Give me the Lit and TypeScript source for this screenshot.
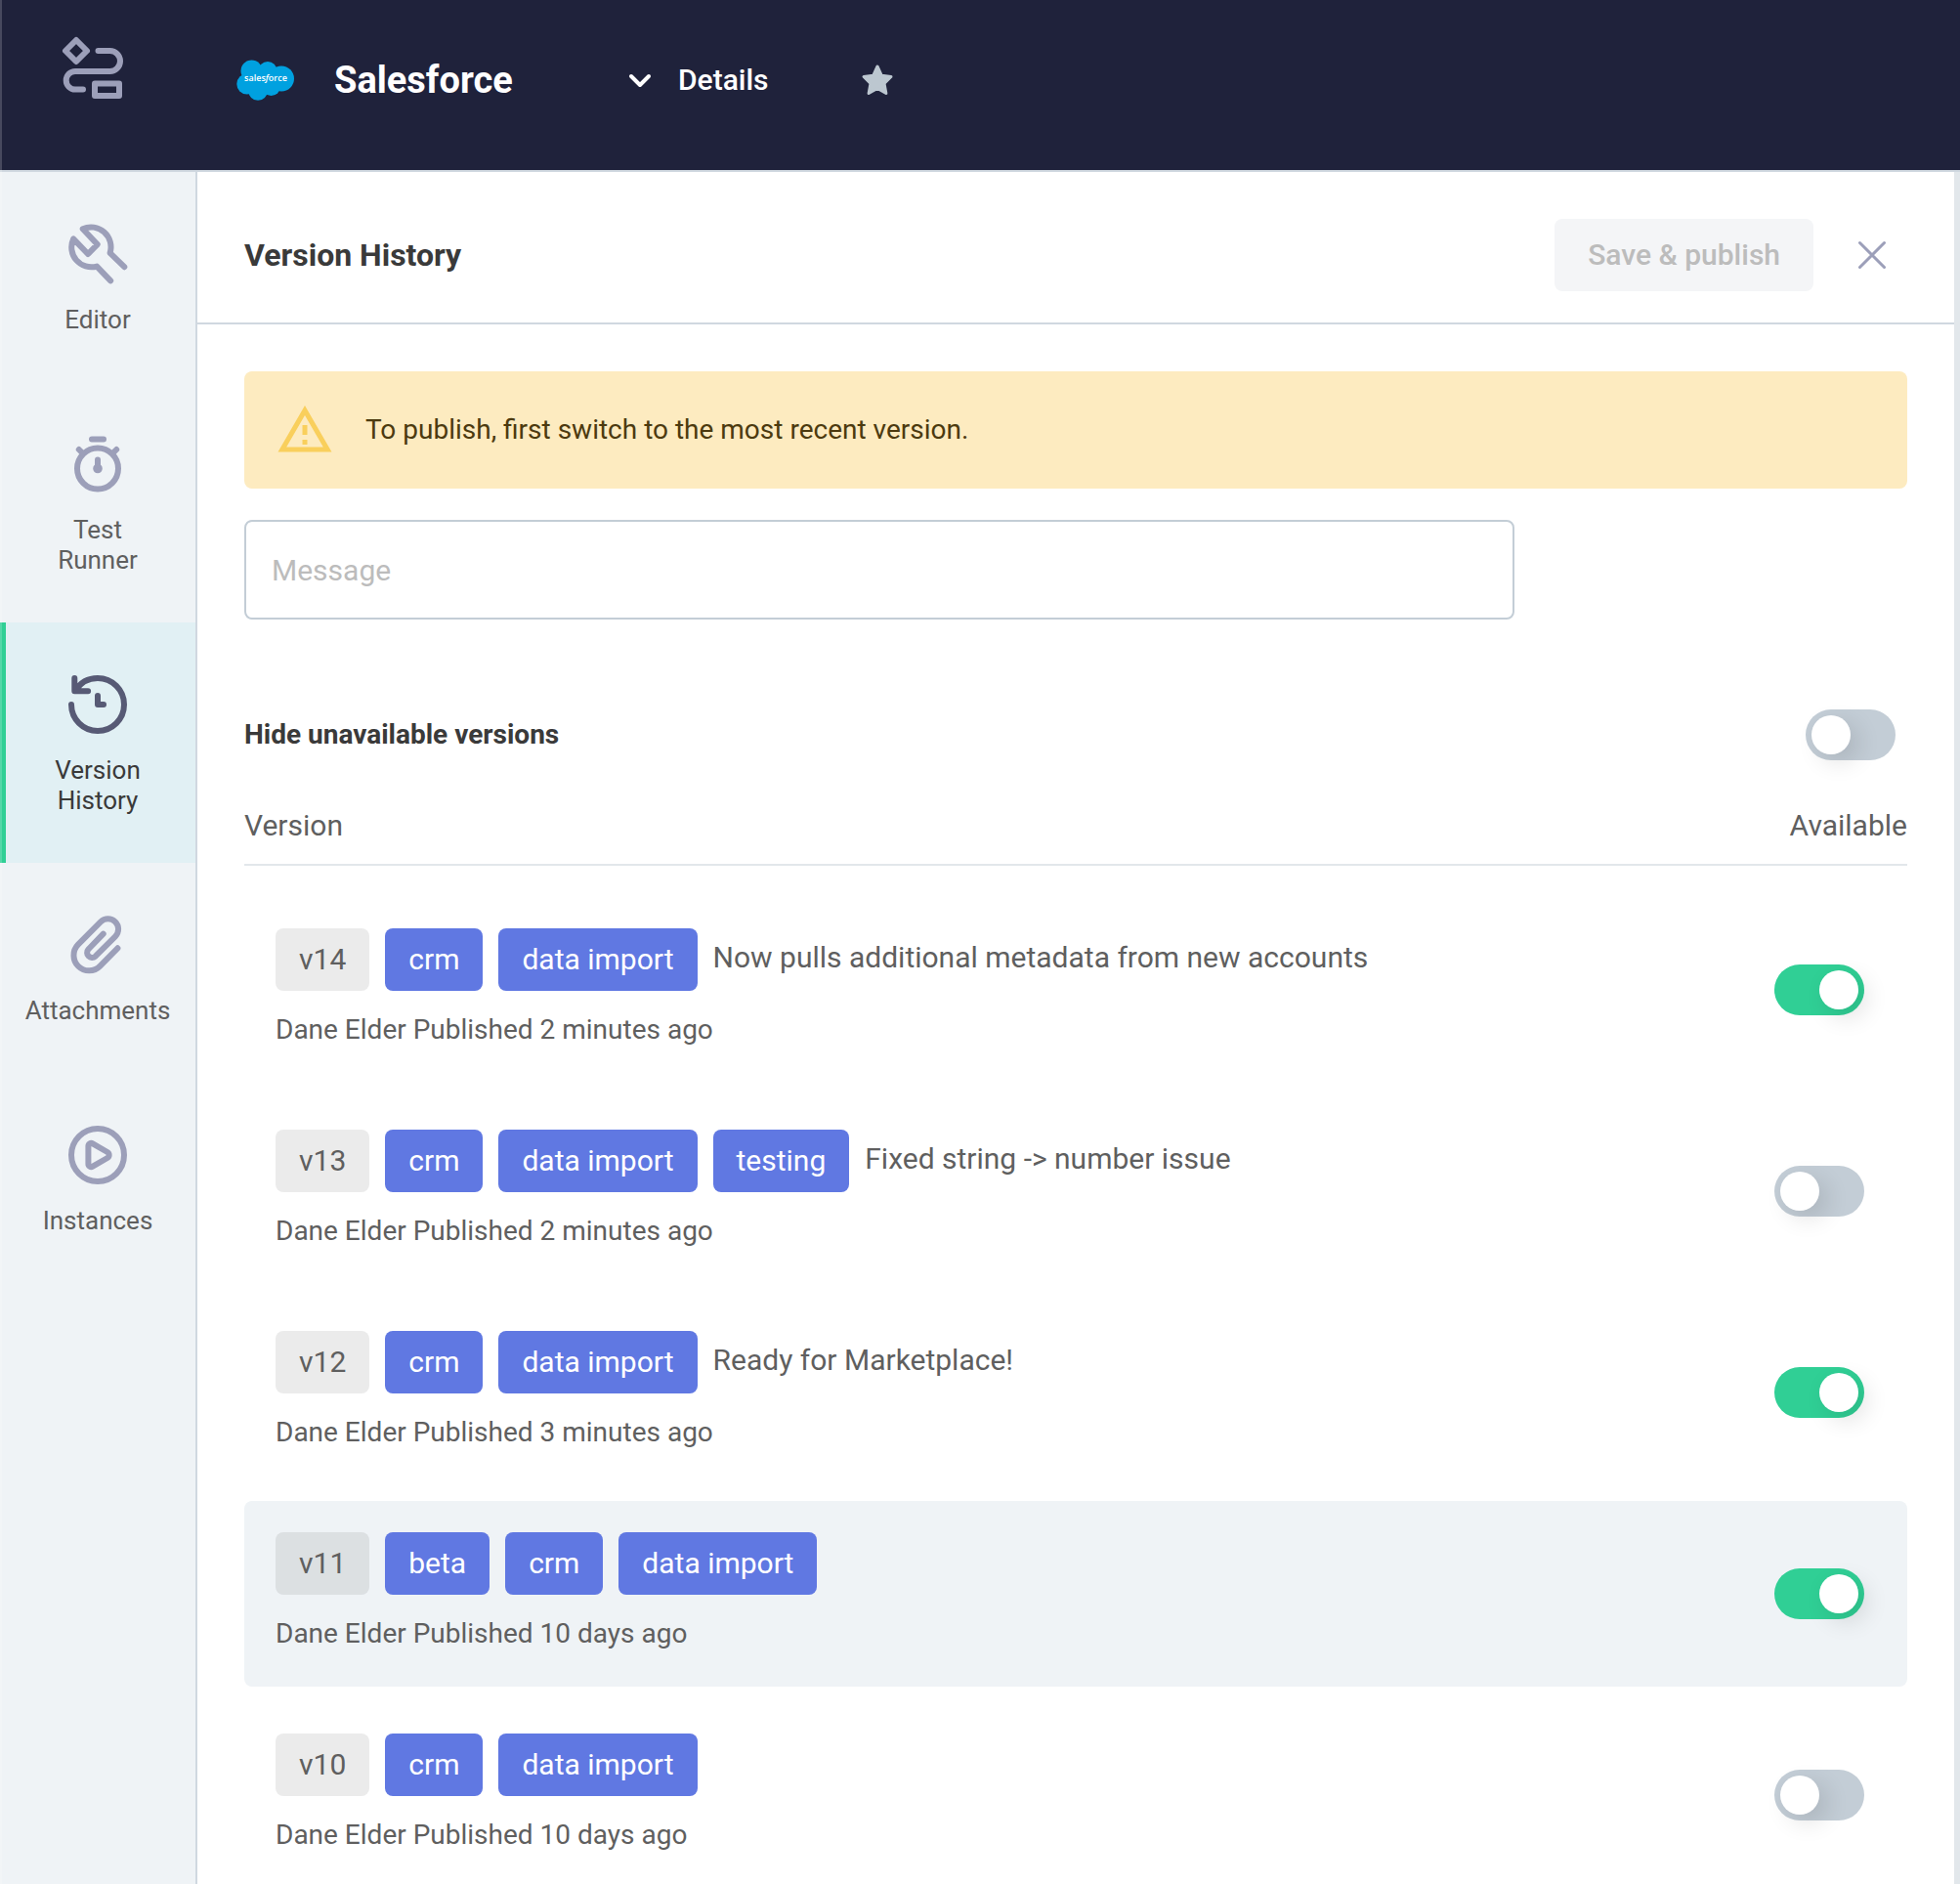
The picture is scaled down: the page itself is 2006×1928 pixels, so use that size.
import { LitElement, html, css, svg, nothing } from "lit";
import type { SVGTemplateResult } from "lit";
import { customElement, property, state } from "lit/decorators.js";
import { classMap } from "lit/directives/class-map.js";

interface NavItem {
  id: string;
  label: string;
  icon: SVGTemplateResult;
}

interface VersionRow {
  version: string;
  tags: string[];
  message?: string;
  published: string;
  available: boolean;
  current?: boolean;
}

const NAV_ITEMS: NavItem[] = [
  {
    id: "editor",
    label: "Editor",
    icon: svg`<path d="M21.1 16.4 L16.2 11.6 A6.8 6.8 0 0 0 6.9 3.4 L11.9 8.7 L8.7 12 L3.7 6.8 A6.8 6.8 0 0 0 11.7 16.2 L16.4 21.1"/>`,
  },
  {
    id: "test",
    label: "Test Runner",
    icon: svg`<circle cx="12" cy="13.5" r="7"/><path d="M10 3.5h4M5.6 7l1.2 1.2M18.4 7l-1.2 1.2M12 10.5v3"/><circle cx="12" cy="13.5" r="0.6"/>`,
  },
  {
    id: "history",
    label: "Version History",
    icon: svg`<path d="M3 12a9 9 0 1 0 9-9c-3.2 0-6 1.6-7.6 4.3M4.1 3v4.4h4.6M12 9v3h2"/>`,
  },
  {
    id: "attachments",
    label: "Attachments",
    icon: svg`<path d="M18.8 13.1 L12.8 19.2 A5.2 5.2 0 0 1 5.3 11.9 L13 4.1 A3.5 3.5 0 0 1 18 9.1 L11.2 15.9 A1.7 1.7 0 0 1 8.8 13.5 L13.9 8.2"/>`,
  },
  {
    id: "instances",
    label: "Instances",
    icon: svg`<circle cx="12" cy="12" r="9"/><path d="M8.8 9a1 1 0 0 1 1.5-.9l5 2.9a1.15 1.15 0 0 1 0 2l-5 2.9A1 1 0 0 1 8.8 15z"/>`,
  },
];

const VERSIONS: VersionRow[] = [
  {
    version: "v14",
    tags: ["crm", "data import"],
    message: "Now pulls additional metadata from new accounts",
    published: "Dane Elder Published 2 minutes ago",
    available: true,
  },
  {
    version: "v13",
    tags: ["crm", "data import", "testing"],
    message: "Fixed string -> number issue",
    published: "Dane Elder Published 2 minutes ago",
    available: false,
  },
  {
    version: "v12",
    tags: ["crm", "data import"],
    message: "Ready for Marketplace!",
    published: "Dane Elder Published 3 minutes ago",
    available: true,
  },
  {
    version: "v11",
    tags: ["beta", "crm", "data import"],
    published: "Dane Elder Published 10 days ago",
    available: true,
    current: true,
  },
  {
    version: "v10",
    tags: ["crm", "data import"],
    published: "Dane Elder Published 10 days ago",
    available: false,
  },
];

@customElement("app-header")
class AppHeader extends LitElement {
  static styles = css`
    :host {
      display: flex;
      height: 174px;
      background: #1f223b;
      border-bottom: 2px solid #d0d8e0;
      color: #fff;
    }
    .logo {
      flex: 0 0 202px;
      padding: 36px 0 0 62px;
      box-sizing: border-box;
    }
    .logo svg,
    .bar svg {
      display: block;
    }
    .bar {
      display: flex;
      align-items: center;
      flex: 1;
      padding: 0 40px 10px;
    }
    .title {
      margin: 0 0 0 40px;
      width: 298px;
      font-size: 38px;
      line-height: 44px;
      font-weight: 700;
    }
    button {
      display: flex;
      align-items: center;
      padding: 0;
      border: 0;
      background: none;
      color: inherit;
      font: inherit;
      cursor: pointer;
    }
    .details {
      gap: 24px;
      font-size: 30px;
      line-height: 36px;
      font-weight: 500;
    }
    .star {
      margin-left: 90px;
    }
  `;

  render() {
    return html`
      <div class="logo">
        <svg width="66" height="68" viewBox="0 0 66 68" fill="none" stroke="#9c9fb9"
          stroke-width="6" stroke-linecap="round" stroke-linejoin="round" aria-hidden="true">
          <path d="M16 5 L27 16 L16 27 L5 16z" />
          <path d="M38.500 16 H50.500 A10.500 10.500 0 0 1 50.500 37 H15 A9.300 9.300 0 0 0 15 55.600 H23" />
          <rect x="35" y="49.500" width="25" height="12.500" />
        </svg>
      </div>
      <div class="bar">
        <svg width="60" height="42" viewBox="0 0 60 42" role="img" aria-label="Salesforce logo">
          <g fill="#00a1e0">
            <circle cx="15.500" cy="11.500" r="11" />
            <circle cx="32" cy="11.500" r="9.500" />
            <circle cx="46" cy="19.500" r="13" />
            <circle cx="10.800" cy="25" r="10.500" />
            <circle cx="22" cy="32" r="9.800" />
            <circle cx="35.500" cy="27.500" r="9.500" />
            <path d="M12 12h36v15H12z" />
          </g>
          <text x="30" y="22" text-anchor="middle" fill="#fff" font-size="9" font-weight="600"
            font-family="Open Sans, Noto Sans, sans-serif">sales<tspan font-style="italic">f</tspan>orce</text>
        </svg>
        <h1 class="title">Salesforce</h1>
        <button class="details" type="button">
          <svg width="30" height="30" viewBox="0 0 30 30" fill="none" stroke="#fff" stroke-width="4"
            stroke-linecap="round" stroke-linejoin="round" aria-hidden="true">
            <path d="M6 11l9 9 9-9" />
          </svg>
          Details
        </button>
        <button class="star" type="button" aria-label="Favorite">
          <svg width="42" height="42" viewBox="0 0 42 42" fill="#bcc7d0" stroke="#bcc7d0"
            stroke-width="3" stroke-linejoin="round" aria-hidden="true">
            <path d="M21 7l4.300 9.300 9.700 1.200-7 6.800 1.900 10.200L21 29.500l-8.900 5L14 24.300l-7-6.800 9.700-1.200z" />
          </svg>
        </button>
      </div>
    `;
  }
}

@customElement("side-nav")
class SideNav extends LitElement {
  @property() active = "";

  static styles = css`
    :host {
      flex: 0 0 200px;
      background: #eff3f6;
      border-right: 2px solid #d0d8e0;
    }
    .item {
      display: flex;
      flex-direction: column;
      align-items: center;
      gap: 16px;
      padding: 48px 16px;
      color: #5f5f5f;
      font-size: 26px;
      line-height: 31px;
      text-align: center;
      text-decoration: none;
    }
    .label {
      width: min-content;
    }
    .item svg {
      display: block;
      stroke: #9c9fb9;
    }
    .item.active {
      background: #e1f0f4;
      box-shadow: inset 6px 0 #30cf95;
      color: #3a3a3a;
    }
    .item.active svg {
      stroke: #575a75;
    }
  `;

  render() {
    return html`<nav aria-label="Integration">
      ${NAV_ITEMS.map(
        (item) => html`<a
          href="#${item.id}"
          class=${classMap({ item: true, active: item.id === this.active })}
          aria-current=${item.id === this.active ? "page" : nothing}
        >
          <svg width="72" height="72" viewBox="0 0 24 24" fill="none" stroke-width="2"
            stroke-linecap="round" stroke-linejoin="round" aria-hidden="true">${item.icon}</svg>
          <span class="label">${item.label}</span>
        </a>`
      )}
    </nav>`;
  }
}

@customElement("version-history")
class VersionHistory extends LitElement {
  @state() private rows = VERSIONS;

  static styles = css`
    :host {
      flex: 1;
      min-width: 0;
      display: flex;
      flex-direction: column;
      background: #fff;
      border-right: 6px solid #e2e7eb;
      color: #5f5f5f;
      font-size: 30px;
      line-height: 36px;
    }
    .head {
      display: flex;
      align-items: center;
      padding: 48px 64px 32px 48px;
      border-bottom: 2px solid #d0d8e0;
    }
    h2 {
      flex: 1;
      margin: 0;
      color: #3a3a3a;
      font-size: 32px;
      font-weight: 700;
    }
    .save {
      height: 74px;
      padding: 0 34px;
      border: 0;
      border-radius: 8px;
      background: #f4f5f7;
      color: #bcbcbc;
      font: inherit;
      font-weight: 500;
    }
    .close {
      margin-left: 40px;
      padding: 0;
      border: 0;
      background: none;
      cursor: pointer;
    }
    .close svg,
    .banner svg {
      display: block;
    }
    .content {
      flex: 1;
      min-height: 0;
      overflow-y: auto;
      scrollbar-width: none;
      padding: 48px;
    }
    .banner {
      display: flex;
      align-items: center;
      gap: 32px;
      padding: 30px 32px;
      border-radius: 8px;
      background: #fdebc0;
      color: #4c3a0f;
      font-size: 28px;
    }
    .message {
      display: block;
      box-sizing: border-box;
      width: 100%;
      max-width: 1300px;
      height: 102px;
      margin-top: 32px;
      padding: 0 26px;
      border: 2px solid #c3cdd6;
      border-radius: 8px;
      background: none;
      color: #3a3a3a;
      font: inherit;
    }
    .message::placeholder {
      color: #bcbcbc;
      opacity: 1;
    }
    .filter {
      display: flex;
      align-items: center;
      justify-content: space-between;
      margin-top: 80px;
      color: #3a3a3a;
      font-size: 28px;
      font-weight: 700;
    }
    .toggle {
      appearance: none;
      display: block;
      flex: none;
      width: 92px;
      height: 52px;
      margin: 12px;
      padding: 6px;
      border-radius: 26px;
      background: #c3cdd6;
      cursor: pointer;
    }
    .toggle::before {
      content: "";
      display: block;
      width: 40px;
      height: 40px;
      border-radius: 50%;
      background: #fff;
      box-shadow: 8px 8px 24px rgba(0, 0, 0, 0.12);
    }
    .toggle:checked {
      background: #30cf95;
    }
    .toggle:checked::before {
      margin-left: 40px;
    }
    table {
      width: 100%;
      border-spacing: 0 16px;
    }
    th {
      padding: 21px 0;
      border-bottom: 2px solid #e2e7eb;
      font-weight: 400;
      text-align: left;
    }
    th:last-child {
      text-align: right;
    }
    tbody::before {
      content: "";
      display: table-row;
    }
    td {
      padding: 32px;
    }
    td:first-child {
      border-radius: 8px 0 0 8px;
    }
    td:last-child {
      width: 116px;
      padding: 0 32px;
      border-radius: 0 8px 8px 0;
    }
    .current td {
      background: #eff3f6;
    }
    .line {
      display: flex;
      align-items: center;
      gap: 16px;
    }
    .tag {
      padding: 14px 24px;
      border-radius: 8px;
      background: #6078e2;
      color: #fff;
      white-space: nowrap;
    }
    .tag.version {
      background: rgba(0, 0, 0, 0.08);
      color: inherit;
    }
    .note {
      padding-bottom: 4px;
    }
    .published {
      margin: 18px 0 0;
      font-size: 28px;
      line-height: 44px;
    }
  `;

  private setAvailable(version: string, available: boolean) {
    this.rows = this.rows.map((r) => (r.version === version ? { ...r, available } : r));
  }

  private renderRow(row: VersionRow) {
    return html`<tr class=${classMap({ current: !!row.current })}>
      <td>
        <div class="line">
          <span class="tag version">${row.version}</span>
          ${row.tags.map((t) => html`<span class="tag">${t}</span>`)}
          ${row.message ? html`<span class="note">${row.message}</span>` : nothing}
        </div>
        <p class="published">${row.published}</p>
      </td>
      <td>
        <input class="toggle" type="checkbox" role="switch" aria-label="${row.version} available"
          .checked=${row.available}
          @change=${(e: Event) =>
            this.setAvailable(row.version, (e.target as HTMLInputElement).checked)} />
      </td>
    </tr>`;
  }

  render() {
    return html`
      <header class="head">
        <h2>Version History</h2>
        <button class="save" type="button" disabled>Save &amp; publish</button>
        <button class="close" type="button" aria-label="Close">
          <svg width="40" height="40" viewBox="0 0 40 40" fill="none" stroke="#9c9fb9"
            stroke-width="3" stroke-linecap="round" aria-hidden="true">
            <path d="M7.500 7.500l25 25M32.500 7.500l-25 25" />
          </svg>
        </button>
      </header>
      <div class="content">
        <div class="banner" role="status">
          <svg width="60" height="60" viewBox="0 0 24 24" fill="#f9cf5c" aria-hidden="true">
            <path d="M12 5.990L19.530 19H4.470L12 5.990M12 2L1 21h22L12 2zm1 14h-2v2h2v-2zm0-6h-2v4h2v-4z" />
          </svg>
          <span>To publish, first switch to the most recent version.</span>
        </div>
        <input class="message" type="text" placeholder="Message" aria-label="Message" />
        <div class="filter">
          <label for="hide">Hide unavailable versions</label>
          <input id="hide" class="toggle" type="checkbox" role="switch" />
        </div>
        <table>
          <thead>
            <tr>
              <th scope="col">Version</th>
              <th scope="col">Available</th>
            </tr>
          </thead>
          <tbody>
            ${this.rows.map((r) => this.renderRow(r))}
          </tbody>
        </table>
      </div>
    `;
  }
}

@customElement("app-root")
class AppRoot extends LitElement {
  static styles = css`
    :host {
      position: relative;
      display: flex;
      flex-direction: column;
      height: 100vh;
      overflow: hidden;
      font-family: Roboto, "Liberation Sans", sans-serif;
    }
    :host::before {
      content: "";
      position: absolute;
      inset: 0 auto 0 0;
      width: 2px;
      background: rgba(255, 255, 255, 0.18);
      pointer-events: none;
      z-index: 1;
    }
    .body {
      display: flex;
      flex: 1;
      min-height: 0;
    }
  `;

  render() {
    return html`
      <app-header></app-header>
      <div class="body">
        <side-nav active="history"></side-nav>
        <version-history></version-history>
      </div>
    `;
  }
}
